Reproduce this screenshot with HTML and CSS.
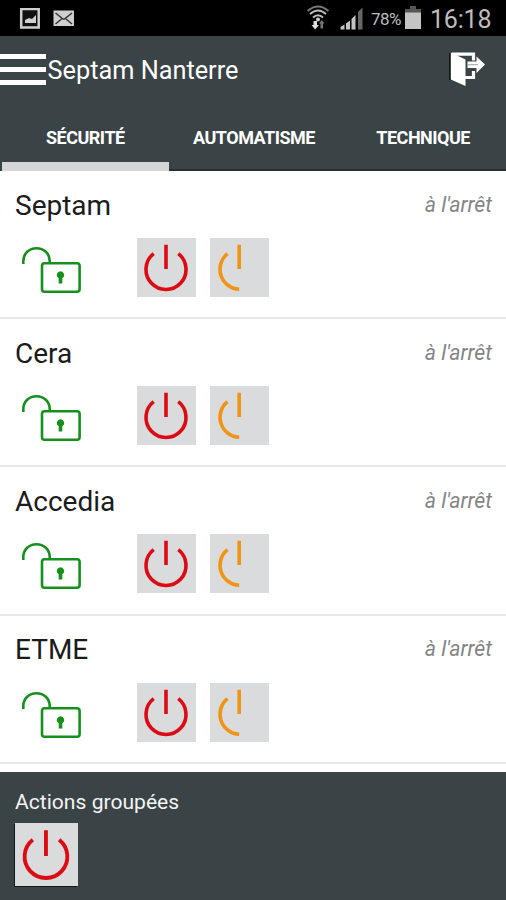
FILE: index.html
```
<!DOCTYPE html>
<html lang="fr">
<head>
<meta charset="utf-8">
<title>Septam Nanterre</title>
<link rel="stylesheet" href="styles.css">
</head>
<body>
<svg class="symbols" aria-hidden="true">
  <symbol id="lock" viewBox="0 0 62 50">
    <g fill="none" stroke="#16901c" stroke-width="2.6">
      <path d="M3.300 19V16C3.300 8.500 9.300 3.200 16.500 3.200S29.700 8.500 29.700 16V18"/>
      <rect x="22" y="18.300" width="37.600" height="28.400" rx="2.500"/>
    </g>
    <path fill="#16901c" d="M40.500 26.300a3.700 3.700 0 0 1 1.800 6.900V38.500h-3.600V33.200a3.700 3.700 0 0 1 1.800-6.900z"/>
  </symbol>
  <symbol id="power" viewBox="0 0 59 59">
    <path fill="none" stroke="#dc0a12" stroke-width="3.600" d="M16.700 15.700A20 20 0 1 0 41.300 15.700M29 6.800V31"/>
  </symbol>
  <symbol id="partial" viewBox="0 0 59 59">
    <path fill="none" stroke="#ef9415" stroke-width="3.600" d="M17.500 15.700A20 20 0 0 0 29.200 51.300M29.200 6.800V31"/>
  </symbol>
</svg>
<div class="app">
  <div class="status">
    <svg class="notif" width="60" height="22" viewBox="0 0 60 22">
      <rect x="2.200" y="1" width="17.500" height="18.500" fill="#111" stroke="#cfcfcf" stroke-width="2.500"/>
      <path fill="#cfcfcf" d="M6 15V12l4-2 3 1 4-4v8z"/>
      <rect x="34.500" y="2.500" width="20.500" height="15.500" fill="#cfcfcf"/>
      <path fill="none" stroke="#333" stroke-width="1.500" d="M36.500 5l7.500 6h1.500L53 5M36.500 16l6-5M53 16l-6-5"/>
    </svg>
    <svg class="signal" width="58" height="26" viewBox="0 0 58 26">
      <g fill="none" stroke="#bdbdbd" stroke-width="2">
        <path stroke="#777" d="M1.500 6Q12 -3 22.500 6"/>
        <path d="M4 9Q12 2 20 9M7 12.500Q12 8 17 12.500"/>
      </g>
      <circle cx="12" cy="14.500" r="2" fill="#ccc"/>
      <path fill="#ddd" d="M7.500 16h3.500v4h2L9.200 24.500 5.500 20h2z"/>
      <path fill="#777" d="M14.500 23.500v-5h-1.500l2.800-3.500 2.700 3.500H17v5z"/>
      <path fill="#c4c4c4" d="M34.500 24.500v-2.500l4-2.500v5zM40 24.500v-6l4-3v9zM45.500 24.500V14l4-4v14.500z"/>
      <path fill="#666" d="M52 24.500V7l4.500-4.500v22z"/>
    </svg>
    <span class="percent">78%</span>
    <svg class="battery" width="16" height="23" viewBox="0 0 16 23">
      <path fill="#555" d="M5 0h6v3h5v4H0V3h5z"/><path fill="#c4c4c4" d="M0 6.500h16V23H0z"/>
    </svg>
    <span class="clock">16:18</span>
  </div>
  <header class="header">
    <div class="burger"><i></i><i></i><i></i></div>
    <h1 class="title">Septam Nanterre</h1>
    <svg class="exit" width="38" height="36" viewBox="0 0 38 36">
      <path fill="#111819" d="M1 1h2.500v27H1z"/>
      <path fill="none" stroke="#fff" stroke-width="3.200" d="M4 2.100H25.500V8.500M17 25.500H25.500V19"/>
      <path fill="#fff" d="M2.800 .5l14.700 7V34L2.800 27.500zM19.500 9.500h9V4.500l8.500 8-8.500 8.500V16h-9z"/>
      <path stroke="#9aa2a3" stroke-width="1" d="M20 12.700h10"/>
    </svg>
  </header>
  <nav class="tabs">
    <div class="tab active"><span>SÉCURITÉ</span></div>
    <div class="tab second"><span>AUTOMATISME</span></div>
    <div class="tab third"><span>TECHNIQUE</span></div>
  </nav>
  <main class="list">
    <section class="row">
      <div class="head"><h2 class="name">Septam</h2><span class="state">à l'arrêt</span></div>
      <div class="controls"><svg class="lock"><use href="#lock"/></svg><svg class="button"><use href="#power"/></svg><svg class="button"><use href="#partial"/></svg></div>
    </section>
    <section class="row">
      <div class="head"><h2 class="name">Cera</h2><span class="state">à l'arrêt</span></div>
      <div class="controls"><svg class="lock"><use href="#lock"/></svg><svg class="button"><use href="#power"/></svg><svg class="button"><use href="#partial"/></svg></div>
    </section>
    <section class="row">
      <div class="head"><h2 class="name">Accedia</h2><span class="state">à l'arrêt</span></div>
      <div class="controls"><svg class="lock"><use href="#lock"/></svg><svg class="button"><use href="#power"/></svg><svg class="button"><use href="#partial"/></svg></div>
    </section>
    <section class="row">
      <div class="head"><h2 class="name">ETME</h2><span class="state">à l'arrêt</span></div>
      <div class="controls"><svg class="lock"><use href="#lock"/></svg><svg class="button"><use href="#power"/></svg><svg class="button"><use href="#partial"/></svg></div>
    </section>
  </main>
  <footer class="group">
    <div class="label">Actions groupées</div>
    <svg class="button large"><use href="#power"/></svg>
  </footer>
</div>
</body>
</html>
```

FILE: styles.css
```
* { box-sizing: border-box; }
body { margin: 0; font-family: Roboto, "Liberation Sans", sans-serif; }
h1, h2 { margin: 0; font-weight: 400; }
svg { display: block; flex: none; }
.symbols { display: none; }
.app { width: 506px; height: 900px; display: flex; flex-direction: column; overflow: hidden; background: #fff; }
.status { flex: none; height: 36px; display: flex; align-items: flex-start; background: #000; color: #bdbdbd; white-space: nowrap; }
.notif { margin: 8px 0 0 19px; }
.signal { margin: 5px 0 0 227px; }
.percent { width: 34px; margin: 9px 0 0 7px; font-size: 17px; line-height: 20px; letter-spacing: -0.500px; }
.battery { margin-top: 6px; }
.clock { margin: 5px 0 0 9px; font-size: 25px; line-height: 30px; letter-spacing: -0.200px; }
.header { flex: none; height: 69px; display: flex; align-items: flex-start; padding: 18px 20px 0 0; background: #3a4345; color: #fff; }
.burger { width: 46px; height: 31px; display: flex; flex-direction: column; justify-content: space-between; }
.burger i { height: 5px; background: #fff; }
.title { margin: 2px 0 0 1.500px; font-size: 25.300px; line-height: 30px; white-space: nowrap; }
.exit { margin: -2px 0 0 auto; }
.tabs { flex: none; height: 66px; display: grid; grid-template-columns: repeat(3, 1fr); background: #3a4345; color: #fff; font-size: 18px; font-weight: 700; letter-spacing: -0.500px; }
.tab { display: flex; justify-content: center; padding-top: 22px; line-height: 22px; border-bottom: 2px solid #293032; white-space: nowrap; }
.tab.active { border-bottom: 9px solid #d6d6d6; margin-left: 2px; }
.tab.second { padding-left: 2px; }
.tab.third { padding-left: 3px; }
.list { flex: none; height: 601px; }
.row { height: 148.200px; border-bottom: 2px solid #e8e8e8; }
.head { height: 67px; padding: 18.700px 14px 0 15px; display: flex; justify-content: space-between; align-items: flex-start; }
.name { font-size: 28px; line-height: 32px; color: #1b1b1b; }
.state { padding-top: 3px; font-size: 21.300px; line-height: 24px; font-style: italic; color: #858585; }
.controls { display: flex; padding-left: 20px; }
.lock { width: 62px; height: 50px; margin: 7px 55px 0 0; }
.button { width: 59px; height: 59px; margin-right: 14px; background: #d9dbdc; }
.group { flex: 1; padding: 17px 15px 0; background: #3a4345; color: #f4f4f4; }
.label { font-size: 21.100px; line-height: 26px; }
.large { width: 63px; height: 63px; margin-top: 8px; box-shadow: -1px 1px 0 #111819; }
```
